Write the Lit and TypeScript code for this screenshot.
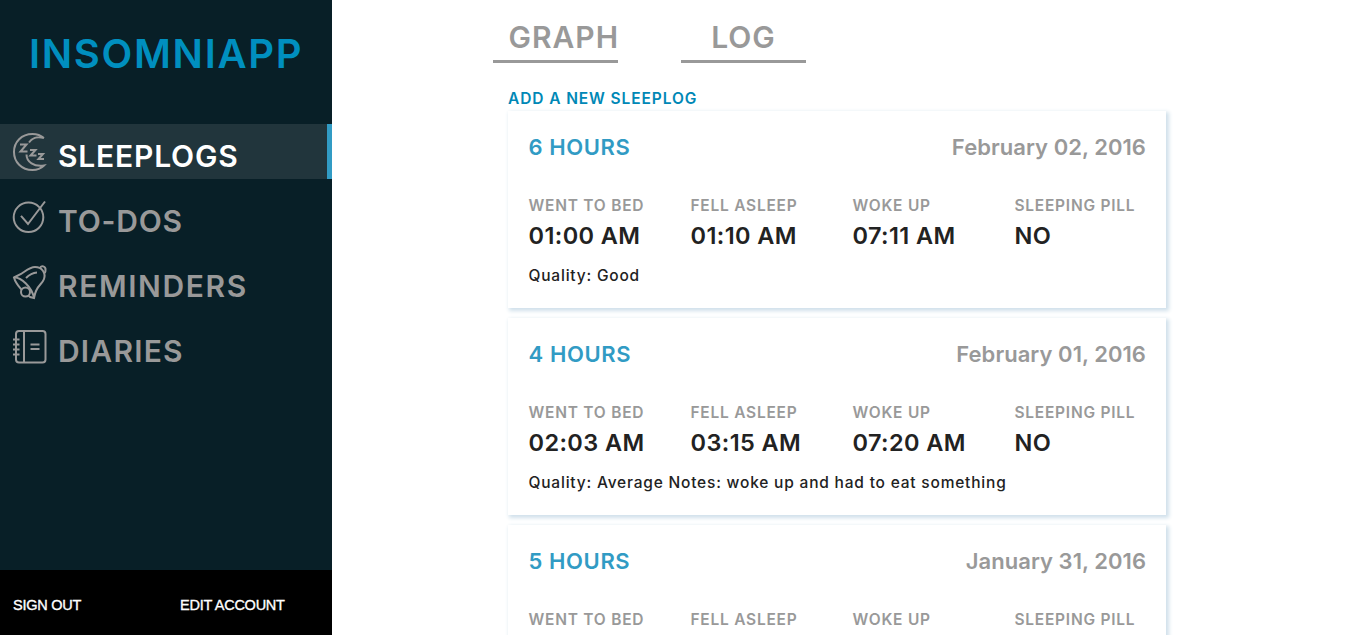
import { LitElement, html, css, svg } from "lit";
import { customElement } from "lit/decorators.js";

const moon = svg`<path d="M31 5C28 2.500 24 1 19.500 1C8.500 1 1 9 1 19S8.500 37 19.500 37C24 37 28 35.500 31 32.500C21 34 13.500 29 13.500 21.500M31 5C24 3 18.500 5.500 16 9.500"/><path d="M7 11.500h6.500l-6 7h7M17 17h5.500l-5 5.500h6M25 21h5l-4.500 5h5.500"/>`;
const check = svg`<circle cx="15.500" cy="17.300" r="14.800"/><path d="M8 15.800L15 24 32 1.500"/>`;
const bell = svg`<path d="M1 12.500L8 9C14 5 17 2 22 2C29 2 33 8 31 14C29 20 23 20 21 33L17 32C12 29 3 20 1 12.500Z"/><path d="M1 12.500C8 12 19 22 21 33M27 3C28 0 33 1 32.500 5C32.500 7 32 8 31 8M13 13Q18 8 24 7.500"/><circle cx="12.500" cy="27" r="4.500" fill="#081f27"/>`;
const book = svg`<rect x="3" y="1" width="29.500" height="31.500" rx="3"/><path d="M11 1v31.500M0 9.500h6.500M0 14.500h6.500M0 19.500h6.500M0 24.500h6.500M17.500 14.500h9M17.500 19h9"/>`;

const nav = [
  { label: "SLEEPLOGS", icon: moon, cls: "active" },
  { label: "TO-DOS", icon: check, cls: "" },
  { label: "REMINDERS", icon: bell, cls: "wide" },
  { label: "DIARIES", icon: book, cls: "mid" },
];

const logs = [
  { hours: "6 HOURS", date: "February 02, 2016", bed: "01:00 AM", asleep: "01:10 AM", woke: "07:11 AM", pill: "NO", note: "Quality: Good" },
  { hours: "4 HOURS", date: "February 01, 2016", bed: "02:03 AM", asleep: "03:15 AM", woke: "07:20 AM", pill: "NO", note: "Quality: Average Notes: woke up and had to eat something" },
  { hours: "5 HOURS", date: "January 31, 2016", bed: "", asleep: "", woke: "", pill: "", note: "" },
];

@customElement("app-root")
export class AppRoot extends LitElement {
  static styles = css`
    :host { display: flex; height: 635px; overflow: hidden; background: #fff; font-family: Inter, "Open Sans", sans-serif; font-weight: 500; white-space: nowrap; }
    * { box-sizing: border-box; }
    .side { width: 332px; flex: none; background: #081f27; display: flex; flex-direction: column; }
    .brand { height: 124px; padding: 29px 0 0 29px; font-size: 40px; line-height: 50px; letter-spacing: 1.700px; font-weight: 600; color: #008fbf; }
    .nav { display: flex; flex-direction: column; gap: 10px; flex: 1; }
    .item { display: flex; height: 55px; padding-left: 13px; color: #999; font-size: 30px; line-height: 65px; letter-spacing: 0.8px; font-weight: 600; }
    .item.wide { letter-spacing: 1.600px; }
    .item.mid { letter-spacing: 1.200px; }
    .item.active { background: #21353c; border-right: 5px solid #319bc4; }
    .item.active .name { color: #fff; }
    .icon { width: 34px; height: 38px; margin: 11px 11px 0 0; fill: none; stroke: #999; stroke-width: 2; overflow: visible; flex: none; }
    .item.active .icon { margin-top: 9px; }
    .foot { height: 65px; background: #000; display: flex; color: #fff; font: 14.5px/70px "Liberation Sans", Arial, sans-serif; padding-left: 13px; letter-spacing: -0.25px; -webkit-text-stroke: 0.35px #fff; }
    .foot .out { width: 167px; }
    .main { padding-left: 161px; }
    .tabs { display: flex; gap: 63px; height: 63px; }
    .tab { width: 125px; border-bottom: 3px solid #999; color: #999; font-size: 30px; line-height: 74px; text-align: center; font-weight: 600; letter-spacing: 1px; }
    .tab.first { padding-left: 15.500px; text-align: left; }
    .list { margin-left: 15px; width: 658px; display: flex; flex-direction: column; }
    .add { height: 48px; line-height: 71px; font-size: 15.500px; font-weight: 600; letter-spacing: 0.9px; color: #0088b6; }
    .card { height: 197px; flex: none; margin-bottom: 10px; padding: 0 20px 0 20.500px; background: #fff; box-shadow: 1.500px 1.500px 4px 1px #d0e0eb; }
    .head { display: flex; justify-content: space-between; height: 84px; line-height: 73px; font-size: 22px; font-weight: 600; letter-spacing: 0.05px; color: #999; }
    .hours { color: #319bc4; letter-spacing: 0.6px; }
    .cols { display: grid; grid-template-columns: repeat(4, 162px); }
    .label { font-size: 15.500px; line-height: 21px; color: #999; font-weight: 600; letter-spacing: 0.750px; min-height: 21px; }
    .value { font-size: 23.500px; line-height: 40px; letter-spacing: 0.4px; color: #222; font-weight: 600; }
    .note { font-size: 15.500px; line-height: 40px; letter-spacing: 0.8px; color: #222; }
  `;

  field(label: string, value: string) {
    return html`<div><div class="label"><span>${label}</span></div>${value ? html`<div class="value"><span>${value}</span></div>` : ""}</div>`;
  }

  render() {
    return html`
      <aside class="side">
        <div class="brand"><span>INSOMNIAPP</span></div>
        <nav class="nav">
          ${nav.map((n) => html`<div class="item ${n.cls}"><svg class="icon" viewBox="0 0 34 38">${n.icon}</svg><span class="name">${n.label}</span></div>`)}
        </nav>
        <div class="foot"><span class="out">SIGN OUT</span><span>EDIT ACCOUNT</span></div>
      </aside>
      <main class="main">
        <div class="tabs"><div class="tab first"><span>GRAPH</span></div><div class="tab"><span>LOG</span></div></div>
        <div class="list">
          <div class="add"><span>ADD A NEW SLEEPLOG</span></div>
          ${logs.map((l) => html`<section class="card">
            <div class="head"><span class="hours">${l.hours}</span><span>${l.date}</span></div>
            <div class="cols">${this.field("WENT TO BED", l.bed)}${this.field("FELL ASLEEP", l.asleep)}${this.field("WOKE UP", l.woke)}${this.field("SLEEPING PILL", l.pill)}</div>
            ${l.note ? html`<div class="note"><span>${l.note}</span></div>` : ""}
          </section>`)}
        </div>
      </main>`;
  }
}
